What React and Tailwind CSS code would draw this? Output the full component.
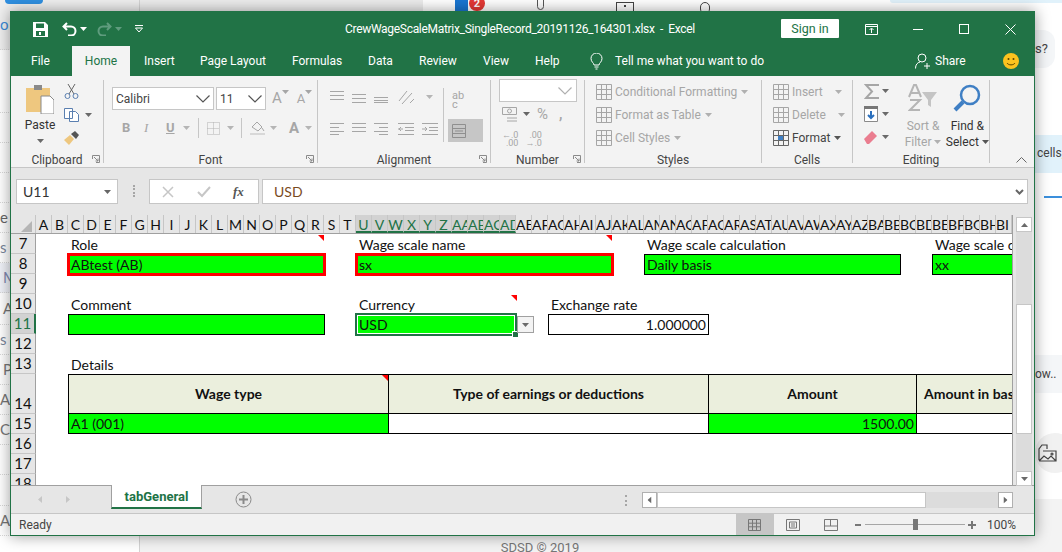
const UI = { fontFamily: 'Roboto, sans-serif' }
const CELL = { fontFamily: 'Lato, sans-serif' }

const LETTERS = 'ABCDEFGHIJKLMNOPQRSTUVWXYZ'.split('')
const COLS = [
  ...LETTERS,
  ...LETTERS.map(l => 'A' + l),
  ...'ABCDEFGHI'.split('').map(l => 'B' + l),
]

// left page list behind the window, rows are 30px apart
const SIDE = [
  { t: 'o', c: 'text-[#3b8ad9] bg-[#efefef]', h: 'h-[50px]' },
  { t: '', c: '', h: 'h-[63px]' },
  { t: '', c: '', h: 'h-[30px]' },
  { t: '', c: '', h: 'h-[30px]' },
  { t: '', c: '', h: 'h-[30px]' },
  { t: 'e', c: 'text-[#666]', h: 'h-[30px]' },
  { t: 's', c: 'text-[#7a869a]', h: 'h-[30px]' },
  { t: 'M', c: 'pl-[3px] text-[#8088b0] bg-[#f0f2f8]', h: 'h-[30px]' },
  { t: 'A', c: 'pl-[3px] text-[#777]', h: 'h-[32px]' },
  { t: 's', c: 'text-[#7a869a]', h: 'h-[30px]' },
  { t: 'P', c: 'pl-[3px] text-[#777]', h: 'h-[30px]' },
  { t: 'A', c: 'text-[#777]', h: 'h-[30px]' },
  { t: 'C', c: 'text-[#777]', h: 'h-[30px]' },
  { t: '', c: '', h: 'h-[30px]' },
  { t: '', c: '', h: 'h-[31px]' },
  { t: 'A', c: 'text-[#777]', h: 'h-[30px]' },
]

function Caret({ color = '#6a6a6a', className = '' }) {
  return (
    <svg width="7" height="4" viewBox="0 0 7 4" className={className}>
      <path d="M0 0h7L3.5 4z" fill={color} />
    </svg>
  )
}

function Launcher() {
  return (
    <svg width="8" height="8" viewBox="0 0 8 8" fill="none" stroke="#8a8a8a">
      <path d="M.5 4V.5H7.5V7.5H4M2 2l4 4M6 3.5V6H3.5" />
    </svg>
  )
}

function Chevron({ color = '#555', w = 14 }) {
  return (
    <svg width={w} height="8" viewBox="0 0 14 8" fill="none" stroke={color} strokeWidth="1.2">
      <path d="M.5.5 7 7 13.5.5" />
    </svg>
  )
}

function Lines({ rows = ['M0 .5h14', 'M0 4.5h14', 'M0 8.5h14'] }) {
  return (
    <svg width="14" height="12" viewBox="0 0 14 12" stroke="#a6a6a6" fill="none">
      {rows.map(d => <path key={d} d={d} />)}
    </svg>
  )
}

function Group({ label, launcher, width, children }) {
  return (
    <div className={`${width} mt-1 mb-1 border-r border-[#c6c6c6] flex flex-col relative`}>
      <div className="flex-1 min-h-0">{children}</div>
      <div className="h-[16px] -mb-[5px] flex items-center justify-center text-[12px] text-[#444] leading-none">{label}</div>
      {launcher && <div className="absolute right-[3px] bottom-0 flex"><Launcher /></div>}
    </div>
  )
}

function GreyRow({ icon, label, caret = 'ml-1', dark }) {
  return (
    <div className={`h-[23px] flex items-center text-[12px] whitespace-nowrap ${dark ? 'text-[#444]' : 'text-[#a6a6a6]'}`}>
      <span className="w-[16px] h-[16px] flex">{icon}</span>
      <span className="ml-[3px]">{label}</span>
      <Caret color={dark ? '#555' : '#b0b0b0'} className={caret} />
    </div>
  )
}

function TableIcon({ color = '#a6a6a6', accent }) {
  return (
    <svg width="16" height="16" viewBox="0 0 16 16" fill="none" stroke={color}>
      <path d="M.5.5h15v15H.5zM.5 5.5h15M.5 10.5h15M5.5.5v15M10.5.5v15" />
      {accent && <path d="M5 6h5v4H5z" fill={accent} stroke="none" />}
    </svg>
  )
}

function Triangle({ className }) {
  return <div className={`absolute w-[6px] h-[6px] bg-[#f00] [clip-path:polygon(0_0,100%_0,100%_100%)] ${className}`} />
}

function Label({ col, children }) {
  return <div className={`${col} h-[20px] pl-[3px] leading-[22px] text-[14px] text-[#111] whitespace-nowrap`}>{children}</div>
}

function Box({ col, children, red, align = 'text-left', bg = 'bg-[#00ff00]', w = 'w-[257px]' }) {
  const look = red
    ? 'w-[259px] h-[23px] -ml-[1px] -mt-[1px] border-[3px] border-[#f00] pl-[1px] leading-[18px]'
    : `${w} h-[21px] border border-black pl-[2px] pr-[2px] leading-[20px]`
  return <div className={`${col} ${look} ${bg} ${align} text-[14px] text-[#111] whitespace-nowrap overflow-hidden`}>{children}</div>
}

function HeadCell({ col, w, children, left }) {
  return (
    <div className={`${col} ${w} h-[41px] pb-[2px] bg-[#ebefdd] border border-black -mr-[1px] flex items-center ${left ? 'pl-[7px]' : 'justify-center'} font-bold text-[14px] text-[#111] whitespace-nowrap`}>
      {children}
    </div>
  )
}

function DataCell({ col, w, green, children }) {
  return (
    <div className={`${col} ${w} h-[21px] -mt-px border border-black px-[2px] text-[14px] leading-[20px] text-[#111] whitespace-nowrap ${green ? 'bg-[#00ff00]' : 'bg-white'}`}>
      {children}
    </div>
  )
}

function Row({ n, tall, active, children }) {
  return (
    <div className={`flex ${tall ? 'h-[40px]' : 'h-[20px]'}`}>
      <div className={`w-[25px] shrink-0 z-10 border-b border-r border-b-[#c6c6c6] flex items-end justify-center text-[15px] leading-[19px] ${active ? 'bg-[#d2d2d2] border-r-2 border-r-[#217346] text-[#217346]' : 'bg-[#e6e6e6] border-r-[#a0a0a0] text-[#111]'}`}>
        {n}
      </div>
      <div className="grid grid-cols-[repeat(61,16px)] relative items-start">{children}</div>
    </div>
  )
}

function Backdrop() {
  return (
    <>
      {/* page behind the Excel window */}
      <div className="flex h-[552px]">
        <div className="w-[140px] shrink-0 border-r border-[#d4d4d4] bg-white" style={CELL}>
          {SIDE.map((s, i) => (
            <div key={i} className={`${s.h} border-b border-dotted border-[#d8d8d8] text-[15px] flex items-center ${s.c}`}>{s.t}</div>
          ))}
        </div>
        <div className="flex-1 flex flex-col">
          <div className="h-[11px] shrink-0 bg-[#ededed]" />
          <div className="h-[489px] shrink-0 bg-[#f6f6f6]" />
          <div className="flex-1 bg-[#f3f3f3] text-center text-[12px] text-[#777] pr-[95px]" style={UI}>
            <div className="h-[36px] pt-[24px] leading-[14px] whitespace-nowrap">Version: MNS Tests / SDP for Air 2019 / Saddin.Pan Server time: 10:30 GMT 2019</div>
            <div className="pt-[3px] text-[13px] leading-[18px]">SDSD © 2019</div>
          </div>
        </div>
        <div className="w-[27px] shrink-0 bg-white flex flex-col text-[13px] text-[#444]" style={UI}>
          <div className="h-[30px]" />
          <div className="h-[38px] w-[20px] bg-[#f4f6f8] rounded-r-xl leading-[38px]">s?</div>
          <div className="h-[67px]" />
          <div className="h-[38px] bg-[#e1f2fb] pl-[2px] text-[12px] leading-[36px] whitespace-nowrap">cells,</div>
          <div className="h-[23px]" />
          <div className="h-[2px] ml-[9px] bg-[#3b8fdc]" />
          <div className="h-[157px]" />
          <div className="h-[38px] bg-[#f4f6f8] text-[12px] leading-[38px]">ow..</div>
          <div className="h-[40px]" />
          <div className="w-[40px] h-[40px] rounded-full bg-[#f1f1f1] flex items-center pl-[3px]">
            <svg width="19" height="18" viewBox="0 0 19 18" fill="none" stroke="#444" strokeWidth="1.2">
              <path d="M1 16V5l3-4h5v4M5 7h13v10H1M1 17l5-5 4 3 3-3 5 5" />
              <circle cx="14" cy="10" r="1" />
            </svg>
          </div>
          <div className="h-[26px]" />
          <div className="flex-1 bg-[#f3f3f3]" />
        </div>
      </div>
      <div className="absolute top-0 left-[5px] w-[38px] h-[4px] bg-[#2f8fe0] rounded-b" />
      <div className="absolute top-0 left-[423px] w-[640px] h-[11px] bg-white flex">
        <div className="absolute left-[32px] top-0 w-[13px] h-[11px] bg-[#1976d2]" />
        <div className="absolute left-[46px] -top-[4px] w-[16px] h-[15px] rounded-full bg-[#e53935] text-white text-[11px] text-center leading-[15px] font-bold" style={UI}>2</div>
        <div className="absolute left-[114px] -top-[4px] w-[7px] h-[14px] rounded-full border border-[#555]" />
        <div className="absolute left-[193px] top-[2px] w-[18px] h-[9px] border border-b-0 border-[#444] flex justify-center pt-[2px]">
          <div className="w-[2px] h-[2px] bg-[#444]" />
        </div>
        <div className="absolute left-[277px] top-[2px] w-[10px] h-[12px] rounded-full border border-[#444]" />
        <div className="absolute left-[467px] top-0 w-[190px] h-[3px] bg-[#e1f2fb] rounded-b" />
      </div>
    </>
  )
}

function TitleBar() {
  return (
    <div className="h-[34px] bg-[#217346] flex items-center text-white relative">
      <svg width="15" height="15" viewBox="0 0 15 15" className="ml-[22px]" fill="white">
        <path fillRule="evenodd" d="M0 0h12l3 3v12H0zM3 1.500V6h8V1.500zM3 9v5h9V9z" />
        <path d="M6 10h2v3H6z" />
      </svg>
      <svg width="15" height="14" viewBox="0 0 15 14" className="ml-[14px]" fill="none" stroke="white" strokeWidth="2">
        <path d="M5 1 1.500 4.500 5 8M2 4.500h7a4.500 4.500 0 0 1 0 9H6" />
      </svg>
      <Caret color="#fff" className="ml-[3px]" />
      <svg width="15" height="14" viewBox="0 0 15 14" className="ml-[10px]" fill="none" stroke="#5f9c7e" strokeWidth="2">
        <path d="M10 1l3.500 3.500L10 8M13 4.500H6a4.500 4.500 0 0 0 0 9h3" />
      </svg>
      <Caret color="#5f9c7e" className="ml-[3px]" />
      <svg width="10" height="10" viewBox="0 0 10 10" className="ml-[12px]" fill="none" stroke="#fff">
        <path d="M1 1.500h8M1.500 4h7L5 8z" />
      </svg>
      <div className="absolute left-[334px] text-[12px] tracking-[-0.3px] whitespace-pre" style={UI}>CrewWageScaleMatrix_SingleRecord_20191126_164301.xlsx  -  Excel</div>
      <div className="ml-auto flex items-center">
        <div className="w-[58px] h-[19px] mb-[1px] bg-white text-[#217346] text-[12.5px] leading-[19px] text-center rounded-[1px]" style={UI}>Sign in</div>
        <svg width="13" height="11" viewBox="0 0 13 11" className="ml-[26px]" fill="none" stroke="#fff">
          <path d="M.5.500h12v10H.5zM.5 2.500h12M6.500 9V4.500M4.500 6l2-2 2 2" />
        </svg>
        <div className="ml-[35px] w-[10px] h-px bg-white" />
        <div className="ml-[36px] w-[10px] h-[10px] border border-white" />
        <svg width="11" height="11" viewBox="0 0 11 11" className="ml-[36px] mr-[18px]" stroke="#fff">
          <path d="M.5.500l10 10M10.500.500l-10 10" />
        </svg>
      </div>
    </div>
  )
}

function TabRow() {
  const tabs = [
    ['Insert', 'ml-[14px] w-[29px]'], ['Page Layout', 'ml-[27px] w-[65px]'], ['Formulas', 'ml-[27px] w-[49px]'],
    ['Data', 'ml-[27px] w-[24px]'], ['Review', 'ml-[27px] w-[37px]'], ['View', 'ml-[27px] w-[25px]'], ['Help', 'ml-[27px] w-[25px]'],
  ]
  return (
    <div className="h-[30px] bg-[#217346] flex items-center text-white text-[12px] whitespace-nowrap" style={UI}>
      <span className="ml-[20px] w-[18px]">File</span>
      <div className="ml-[23px] w-[58px] h-[30px] bg-[#f3f3f3] text-[#217346] text-center leading-[30px]">Home</div>
      {tabs.map(([t, m]) => <span key={t} className={m}>{t}</span>)}
      <svg width="13" height="17" viewBox="0 0 13 17" className="ml-[30px]" fill="none" stroke="#fff">
        <path d="M4 12c0-2-3-3-3-6.500a5.500 5.500 0 0 1 11 0C12 9 9 10 9 12zM4.500 14h4M5.500 16h2" />
      </svg>
      <span className="ml-[12px]">Tell me what you want to do</span>
      <svg width="15" height="16" viewBox="0 0 15 16" className="ml-auto" fill="none" stroke="#fff">
        <circle cx="7" cy="5" r="4" />
        <path d="M.5 15.500c0-4 2-6 4.500-6.500M9 13h6M12 10v6" />
      </svg>
      <span className="ml-[5px] w-[29px]">Share</span>
      <svg width="16" height="16" viewBox="0 0 16 16" className="ml-[39px] mr-[15px]">
        <circle cx="8" cy="8" r="8" fill="#fcc31e" />
        <circle cx="5.500" cy="6" r="1" fill="#5a4500" />
        <circle cx="10.500" cy="6" r="1" fill="#5a4500" />
        <path d="M4 10c1.500 2.500 6.500 2.500 8 0" stroke="#5a4500" fill="none" />
      </svg>
    </div>
  )
}

function Ribbon() {
  return (
    <div className="h-[92px] bg-[#f3f3f3] flex border-b border-[#c6c6c6]" style={UI}>
      <Group label="Clipboard" launcher width="w-[93px]">
        <div className="flex pl-[12px] pt-[4px]">
          <div className="w-[34px] flex flex-col items-center">
            <svg width="28" height="30" viewBox="0 0 28 30">
              <path d="M0 4h24v24H0z" fill="#eec77f" />
              <path d="M8 1h8v5H8z" fill="#8a8a8a" />
              <path d="M15 12h9l4 4v14H15z" fill="#fff" stroke="#8a8a8a" />
            </svg>
            <div className="text-[12px] text-[#333] mt-[3px] leading-[16px]">Paste</div>
            <Caret className="mt-[6px]" />
          </div>
          <div className="ml-[7px] flex flex-col">
            <svg width="15" height="15" viewBox="0 0 15 15" fill="none" stroke="#5a7fb0">
              <path d="M4 0l6 10M11 0 5 10" stroke="#666" />
              <circle cx="3.500" cy="12" r="2.500" />
              <circle cx="11.500" cy="12" r="2.500" />
            </svg>
            <div className="flex items-center mt-[9px]">
              <svg width="15" height="14" viewBox="0 0 15 14" fill="#fff" stroke="#5a7fb0">
                <path d="M.5.500h8v10h-8zM5.500 3.500h6l3 3v7h-9z" />
              </svg>
              <Caret className="ml-[6px]" />
            </div>
            <svg width="16" height="14" viewBox="0 0 16 14" className="mt-[9px]">
              <path d="M0 9l6-5 4 4-5 6z" fill="#eec77f" />
              <path d="M7 3l4-3 4 4-3 4z" fill="#555" />
            </svg>
          </div>
        </div>
      </Group>

      <Group label="Font" launcher width="w-[214px]">
        <div className="pl-[8px] pt-[7px]">
          <div className="flex h-[23px] text-[12px] text-[#444]">
            <div className="w-[102px] bg-white border border-[#c6c6c6] flex items-center justify-between pl-[3px] pr-[3px]">Calibri<Chevron /></div>
            <div className="w-[50px] ml-[2px] bg-white border border-[#c6c6c6] flex items-center justify-between pl-[3px] pr-[3px]">11<Chevron /></div>
            <span className="ml-[6px] text-[#a6a6a6] text-[15px] leading-[22px]">A</span>
            <Caret color="#a6a6a6" className="mt-[3px]" />
            <span className="ml-[8px] text-[#a6a6a6] text-[13px] leading-[24px]">A</span>
            <Caret color="#a6a6a6" className="mt-[3px]" />
          </div>
          <div className="flex items-center h-[20px] mt-[8px] ml-[10px] text-[#a6a6a6] text-[13px]">
            <span className="font-bold w-[22px]">B</span>
            <span className="italic w-[22px]" style={{ fontFamily: '"Liberation Serif", serif' }}>I</span>
            <span className="underline font-bold w-[17px]">U</span>
            <Caret color="#b5b5b5" />
            <div className="ml-[8px] w-px h-[20px] bg-[#c6c6c6]" />
            <svg width="13" height="13" viewBox="0 0 13 13" className="ml-[8px]" fill="none" stroke="#b0b0b0" strokeDasharray="1 1">
              <path d="M.5.500h12v12H.5zM.5 6.500h12M6.500.500v12" />
            </svg>
            <Caret color="#b5b5b5" className="ml-[7px]" />
            <div className="ml-[7px] w-px h-[20px] bg-[#c6c6c6]" />
            <svg width="16" height="16" viewBox="0 0 16 16" className="ml-[8px]" fill="none" stroke="#a6a6a6">
              <path d="M2 7l5-5 5 5-4 4zM12 8l2 3" />
              <path d="M0 14h15" strokeWidth="2" stroke="#d8d8d8" />
            </svg>
            <Caret color="#b5b5b5" className="ml-[4px]" />
            <span className="ml-[12px] font-bold text-[15px]">A</span>
            <Caret color="#b5b5b5" className="ml-[6px]" />
          </div>
        </div>
      </Group>

      <Group label="Alignment" launcher width="w-[173px]">
        <div className="pl-[12px] pt-[8px] flex">
          <div className="w-[113px]">
            <div className="flex items-center h-[18px] gap-[8px]">
              <Lines />
              <Lines rows={['M0 3.500h14', 'M0 7.500h14', 'M0 11.500h14']} />
              <Lines rows={['M0 6.500h14', 'M0 9.500h14', 'M0 11.500h14']} />
              <svg width="22" height="17" viewBox="0 0 22 17" className="ml-[2px]" fill="none" stroke="#a6a6a6">
                <path d="M1 12 9 2M4 15 14 4M12 14l4-4" />
              </svg>
              <Caret color="#b5b5b5" className="-ml-[2px]" />
            </div>
            <div className="flex items-center h-[18px] mt-[14px] gap-[8px]">
              <Lines rows={['M0 .5h14', 'M0 4.500h9', 'M0 8.500h14', 'M0 11.500h9']} />
              <Lines />
              <Lines rows={['M0 .5h14', 'M5 4.500h9', 'M0 8.500h14', 'M5 11.500h9']} />
              <svg width="16" height="12" viewBox="0 0 16 12" className="ml-[2px]" fill="none" stroke="#a6a6a6">
                <path d="M0 .5h16M7 4.500h9M7 7.500h9M0 11.500h16M5 6H0M3 4 1 6l2 2" />
              </svg>
              <svg width="16" height="12" viewBox="0 0 16 12" fill="none" stroke="#a6a6a6">
                <path d="M0 .5h16M7 4.500h9M7 7.500h9M0 11.500h16M0 6h5M3 4l2 2-2 2" />
              </svg>
            </div>
          </div>
          <div className="border-l border-[#c6c6c6] h-[54px] pl-[4px] flex flex-col">
            <div className="text-[11px] leading-[9px] text-[#a6a6a6] pl-[4px] pt-[3px]">ab<br />c</div>
            <div className="mt-[10px] w-[35px] h-[23px] bg-[#c6c6c6] flex items-center pl-[4px]">
              <svg width="14" height="14" viewBox="0 0 14 14" fill="none" stroke="#8f8f8f">
                <path d="M.5.500h13v13H.5zM.5 4.500h13M.5 9.500h13M3 7h8" />
              </svg>
            </div>
          </div>
        </div>
      </Group>

      <Group label="Number" launcher width="w-[94px]">
        <div className="pl-[8px]">
          <div className="w-[78px] h-[23px] mt-[-1px] bg-white border border-[#c6c6c6] flex items-center justify-end pr-[4px]"><Chevron color="#b0b0b0" /></div>
          <div className="flex items-center h-[18px] mt-[3px] ml-[3px]">
            <svg width="16" height="16" viewBox="0 0 16 16" fill="none" stroke="#a6a6a6">
              <path d="M.5 1.500h14v7H.5zM5 12h10M5 15h10" />
              <circle cx="7.500" cy="5" r="2" />
            </svg>
            <Caret color="#666" className="ml-[5px]" />
            <span className="ml-[7px] text-[#a6a6a6] text-[15px] leading-none">%</span>
            <span className="ml-[11px] text-[#a6a6a6] text-[14px] font-bold leading-none">,</span>
          </div>
          <div className="flex mt-[8px] ml-[3px] gap-[7px] text-[9px] leading-[8px] text-[#a6a6a6] text-right">
            <span>←.0<br />.00</span>
            <span>.00<br />→.0</span>
          </div>
        </div>
      </Group>

      <Group label="Styles" width="w-[177px]">
        <div className="pl-[11px]">
          <GreyRow icon={<TableIcon />} label="Conditional Formatting" />
          <GreyRow icon={<TableIcon />} label="Format as Table" />
          <GreyRow icon={<TableIcon />} label="Cell Styles" />
        </div>
      </Group>

      <Group label="Cells" width="w-[91px]">
        <div className="pl-[11px]">
          <GreyRow icon={<TableIcon />} label="Insert" caret="ml-[12px]" />
          <GreyRow icon={<TableIcon />} label="Delete" caret="ml-[12px]" />
          <GreyRow icon={<TableIcon color="#666" accent="#3f7fc4" />} label="Format" dark />
        </div>
      </Group>

      <Group label="Editing" width="w-[137px]">
        <div className="flex pl-[11px]">
          <div className="w-[37px] pt-[3px]">
            <div className="flex items-center h-[16px] gap-[2px]">
              <svg width="16" height="15" viewBox="0 0 16 15" fill="none" stroke="#a6a6a6" strokeWidth="2">
                <path d="M15 1H2l6 6.500L2 14h13" />
              </svg>
              <Caret />
            </div>
            <div className="flex items-center h-[16px] mt-[7px] gap-[4px]">
              <svg width="14" height="16" viewBox="0 0 14 16">
                <path d="M.5.500h13v15H.5z" fill="#fff" stroke="#8a8a8a" />
                <path d="M0 0h14v3H0z" fill="#777" />
                <path d="M7 5v7M4 9l3 3 3-3" stroke="#2a6fbd" strokeWidth="2" fill="none" />
              </svg>
              <Caret />
            </div>
            <div className="flex items-center h-[14px] mt-[8px] gap-[5px]">
              <svg width="13" height="13" viewBox="0 0 13 13"><path d="M0 8l8-8 5 5-8 8H3z" fill="#ea7d8f" /></svg>
              <Caret />
            </div>
          </div>
          <div className="w-[46px] flex flex-col items-center text-[12px] leading-[16px] text-[#a6a6a6]">
            <svg width="30" height="28" viewBox="0 0 30 28" className="mt-[4px] mb-[6px]">
              <path d="M14 8h15l-6 8v7l-3-2v-5z" fill="#c4c4c4" />
              <path d="M1 13 6 1h2l5 12M3 9h8M2 16h10L2 26h10" fill="none" stroke="#b5b5b5" strokeWidth="2" />
            </svg>
            <span>Sort &amp;</span>
            <span className="flex items-center gap-[3px]">Filter<Caret color="#b0b0b0" /></span>
          </div>
          <div className="w-[44px] flex flex-col items-center text-[12px] leading-[16px] text-[#333]">
            <svg width="28" height="28" viewBox="0 0 28 28" className="mt-[4px] mb-[6px]" fill="none" stroke="#3f7fc4">
              <circle cx="17" cy="11" r="9" strokeWidth="2.500" />
              <path d="M10 18 2 26" strokeWidth="4" />
            </svg>
            <span>Find &amp;</span>
            <span className="flex items-center gap-[3px]">Select<Caret color="#555" /></span>
          </div>
        </div>
      </Group>

      <div className="flex-1 relative">
        <svg width="11" height="6" viewBox="0 0 11 6" className="absolute left-[26px] bottom-[4px]" fill="none" stroke="#666">
          <path d="M.5 5.500l5-5 5 5" />
        </svg>
      </div>
    </div>
  )
}

function FormulaBar() {
  return (
    <div className="h-[47px] bg-[#e6e6e6] flex items-start pt-[11px] pl-[5px] text-[14px] text-[#333]" style={CELL}>
      <div className="w-[102px] h-[25px] bg-white border border-[#c6c6c6] flex items-center justify-between pl-[6px] pr-[6px]">
        U11<Caret color="#666" />
      </div>
      <div className="w-[2px] h-[12px] mt-[6px] ml-[15px] border-l-2 border-dotted border-[#a6a6a6]" />
      <div className="w-[110px] h-[25px] ml-[14px] bg-white border border-[#c6c6c6] flex items-center pl-[12px]">
        <svg width="12" height="12" viewBox="0 0 12 12" stroke="#c6c6c6" strokeWidth="1.500"><path d="M1 1l10 10M11 1 1 11" /></svg>
        <svg width="14" height="12" viewBox="0 0 14 12" className="ml-[23px]" fill="none" stroke="#c6c6c6" strokeWidth="2"><path d="M1 6l4 4 8-9" /></svg>
        <span className="ml-[22px] italic font-bold text-[13px] text-[#555]" style={{ fontFamily: '"Liberation Serif", serif' }}>fx</span>
      </div>
      <div className="flex-1 h-[25px] ml-[3px] mr-[6px] bg-white border border-[#c6c6c6] flex items-center justify-between pl-[11px] pr-[3px] text-[#7a4a1e]">
        USD
        <svg width="9" height="6" viewBox="0 0 9 6" fill="none" stroke="#666" strokeWidth="2"><path d="M1 1l3.500 3.500L8 1" /></svg>
      </div>
    </div>
  )
}

function ColumnHeader() {
  return (
    <div className="flex h-[19px] border-b border-[#a0a0a0] bg-[#e6e6e6] text-[14px]" style={CELL}>
      <div className="w-[25px] shrink-0 border-r border-[#c6c6c6] flex items-end justify-end pr-[3px] pb-[1px]">
        <div className="w-[11px] h-[11px] bg-[#b5b5b5] [clip-path:polygon(100%_0,100%_100%,0_100%)]" />
      </div>
      {COLS.map((c, i) => {
        const on = i >= 20 && i <= 29
        return (
          <div key={c} className={`w-[16px] shrink-0 overflow-hidden flex whitespace-nowrap border-r border-[#c6c6c6] leading-[19px] ${c.length > 1 ? 'justify-start' : 'justify-center'} ${on ? 'bg-[#d2d2d2] text-[#217346] border-b-2 border-b-[#217346]' : 'text-[#111]'}`}>
            {c}
          </div>
        )
      })}
    </div>
  )
}

function Sheet() {
  return (
    <div className="h-[251px] overflow-hidden bg-white" style={CELL}>
      <Row n={7}>
        <Label col="col-start-3 col-span-16">Role</Label>
        <Triangle className="left-[282px] top-[1px]" />
        <Label col="col-start-21 col-span-16">Wage scale name</Label>
        <Triangle className="left-[570px] top-[1px]" />
        <Label col="col-start-39 col-span-16">Wage scale calculation</Label>
        <Label col="col-start-57 col-span-5">Wage scale code</Label>
      </Row>
      <Row n={8}>
        <Box col="col-start-3 col-span-16" red>ABtest (AB)</Box>
        <Box col="col-start-21 col-span-16" red>sx</Box>
        <Box col="col-start-39 col-span-16">Daily basis</Box>
        <Box col="col-start-57 col-span-5" w="w-[90px]">xx</Box>
      </Row>
      <Row n={9} />
      <Row n={10}>
        <Label col="col-start-3 col-span-16">Comment</Label>
        <Label col="col-start-21 col-span-10">Currency</Label>
        <Triangle className="left-[475px] top-[1px]" />
        <Label col="col-start-33 col-span-10">Exchange rate</Label>
      </Row>
      <Row n={11} active>
        <Box col="col-start-3 col-span-16"> </Box>
        <div className="col-start-21 col-span-10 w-[162px] h-[23px] -ml-[1px] -mt-[1px] border-2 border-[#217346] relative">
          <div className="h-full border border-white bg-[#00ff00] pl-[1px] text-[14px] leading-[17px] text-[#111]">USD</div>
          <div className="absolute -right-[4px] -bottom-[4px] w-[5px] h-[5px] bg-[#217346] border border-white box-content" />
          <div className="absolute -right-[19px] top-[1px] w-[17px] h-[17px] bg-[#f3f3f3] border border-[#a0a0a0] flex items-center justify-center">
            <Caret />
          </div>
        </div>
        <Box col="col-start-33 col-span-10" w="w-[161px]" align="text-right" bg="bg-white">1.000000</Box>
      </Row>
      <Row n={12} />
      <Row n={13}>
        <Label col="col-start-3 col-span-16">Details</Label>
      </Row>
      <Row n={14} tall>
        <HeadCell col="col-start-3 col-span-20" w="w-[321px]">Wage type</HeadCell>
        <Triangle className="left-[346px] top-[1px]" />
        <HeadCell col="col-start-23 col-span-20" w="w-[321px]">Type of earnings or deductions</HeadCell>
        <HeadCell col="col-start-43 col-span-13" w="w-[209px]">Amount</HeadCell>
        <HeadCell col="col-start-56 col-span-6" w="w-[209px]" left>Amount in base currency</HeadCell>
      </Row>
      <Row n={15}>
        <DataCell col="col-start-3 col-span-20" w="w-[321px]" green>A1 (001)</DataCell>
        <DataCell col="col-start-23 col-span-20" w="w-[321px]" />
        <DataCell col="col-start-43 col-span-13" w="w-[209px] text-right" green>1500.00</DataCell>
        <DataCell col="col-start-56 col-span-6" w="w-[209px]" />
      </Row>
      <Row n={16} />
      <Row n={17} />
      <Row n={18} />
    </div>
  )
}

function VScroll() {
  return (
    <div className="w-[21px] h-[270px] bg-[#e6e6e6] flex flex-col pl-[3px] pt-[2px]">
      <div className="w-[16px] h-[15px] bg-white border border-[#c6c6c6] flex items-center justify-center">
        <Caret color="#6a6a6a" className="rotate-180" />
      </div>
      <div className="w-[16px] flex-1 bg-[#dcdcdc] pt-[72px]">
        <div className="h-[130px] bg-white border border-[#c6c6c6]" />
      </div>
      <div className="w-[16px] h-[15px] mb-[-1px] bg-white border border-[#c6c6c6] flex items-center justify-center">
        <Caret color="#6a6a6a" />
      </div>
    </div>
  )
}

function SheetTabs() {
  return (
    <div className="h-[28px] bg-[#e6e6e6] border-t border-[#a0a0a0] flex" style={UI}>
      <svg width="4" height="7" viewBox="0 0 4 7" className="ml-[27px] mt-[10px]"><path d="M4 0v7L0 3.500z" fill="#c6c6c6" /></svg>
      <svg width="4" height="7" viewBox="0 0 4 7" className="ml-[24px] mt-[10px]"><path d="M0 0v7l4-3.500z" fill="#c6c6c6" /></svg>
      <div className="ml-[41px] w-[91px] h-[24px] -mt-px bg-white border-x border-[#a0a0a0] border-b-2 border-b-[#217346] text-center text-[13px] font-bold leading-[24px] text-[#217346]">tabGeneral</div>
      <svg width="17" height="17" viewBox="0 0 17 17" className="ml-[33px] mt-[5px]" fill="none" stroke="#8a8a8a">
        <circle cx="8.500" cy="8.500" r="7.500" />
        <path d="M8.500 4v9M4 8.500h9" strokeWidth="2" />
      </svg>
      <div className="ml-[373px] mt-[9px] w-[2px] h-[11px] border-l-2 border-dotted border-[#a6a6a6]" />
      <div className="ml-[15px] mt-[6px] flex h-[16px] w-[371px]">
        <div className="w-[15px] bg-white border border-[#b0b0b0] flex items-center justify-center"><Caret className="rotate-90" /></div>
        <div className="w-[269px] bg-white border border-[#c6c6c6]" />
        <div className="flex-1 bg-[#dcdcdc]" />
        <div className="w-[15px] bg-white border border-[#b0b0b0] flex items-center justify-center"><Caret className="-rotate-90" /></div>
      </div>
    </div>
  )
}

function StatusBar() {
  return (
    <div className="h-[22px] bg-[#f1f1f1] border-t border-[#c6c6c6] flex items-center text-[12px] text-[#444]" style={UI}>
      <span className="ml-[8px]">Ready</span>
      <div className="ml-auto w-[38px] h-[21px] bg-[#c6c6c6] flex items-center justify-center">
        <svg width="13" height="12" viewBox="0 0 13 12" fill="none" stroke="#777"><path d="M.5.500h12v11H.5zM.5 4.200h12M.5 7.800h12M4.500.500v11M8.500.500v11" /></svg>
      </div>
      <svg width="14" height="12" viewBox="0 0 14 12" className="ml-[12px]" fill="none" stroke="#777"><path d="M.5.500h13v11H.5zM3.500 3h7v6h-7zM5 5h4M5 7h4" /></svg>
      <svg width="14" height="12" viewBox="0 0 14 12" className="ml-[24px]" fill="none" stroke="#777"><path d="M.5 11.500V.5h13v11zM.5 7h13M6.500.500V7" /></svg>
      <div className="ml-[17px] w-[6px] h-[2px] bg-[#777]" />
      <div className="ml-[4px] w-[100px] h-px bg-[#a6a6a6] relative">
        <div className="absolute left-[48px] -top-[5px] w-[5px] h-[11px] bg-[#777]" />
      </div>
      <svg width="8" height="8" viewBox="0 0 8 8" className="ml-[3px]" stroke="#777" strokeWidth="2"><path d="M0 4h8M4 0v8" /></svg>
      <span className="ml-[11px] mr-[18px]">100%</span>
    </div>
  )
}

export default function App() {
  return (
    <div className="relative w-[1062px] h-[552px] overflow-hidden bg-white">
      <Backdrop />
      {/* Excel window */}
      <div className="absolute left-[10px] top-[11px] w-[1025px] h-[525px] border border-[#217346] shadow-[0_0_14px_rgba(0,0,0,0.4)] bg-[#e6e6e6]">
        <TitleBar />
        <TabRow />
        <Ribbon />
        <FormulaBar />
        <div className="flex">
          <div className="w-[1002px] border-r border-[#a0a0a0]">
            <ColumnHeader />
            <Sheet />
          </div>
          <VScroll />
        </div>
        <SheetTabs />
        <StatusBar />
      </div>
    </div>
  )
}
